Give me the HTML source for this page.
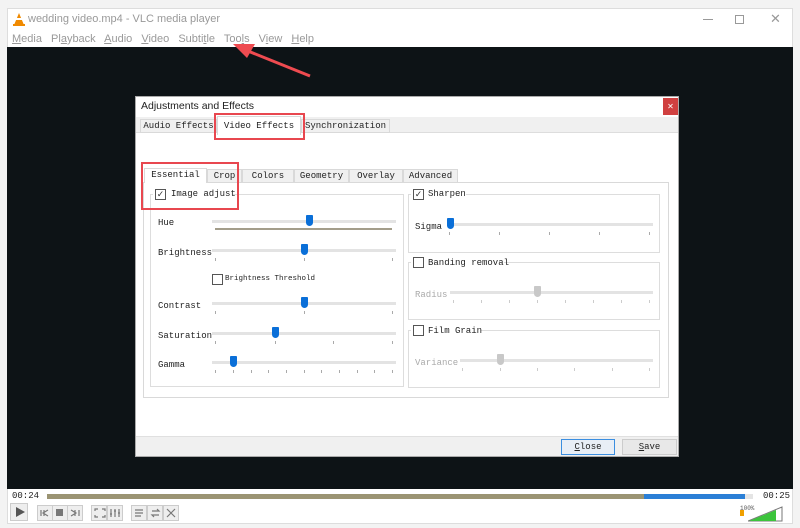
<!DOCTYPE html>
<html><head><meta charset="utf-8"><style>
*{margin:0;padding:0;box-sizing:border-box}
body{width:800px;height:528px;background:#f3f3f3;position:relative;overflow:hidden;font-family:"Liberation Sans",sans-serif}
.a{position:absolute}
.m{font-family:"Liberation Mono",monospace;color:#222;white-space:nowrap}
.trk{position:absolute;height:3px;background:#e3e3e3}
.h{position:absolute;width:7px;height:11px;background:#0a6fd8;border-radius:1px 1px 4px 4px}
.hg{background:#c8c8c8}
.tk{position:absolute;width:1px;height:3px;background:#aaa}
.cb{position:absolute;width:11px;height:11px;border:1px solid #555;background:#fff;font-size:9px;line-height:9px;text-align:center;color:#333}
.grp{position:absolute;border:1px solid #ddd}
.tab{position:absolute;background:#f0f0f0;border:1px solid #d9d9d9;font-family:"Liberation Mono",monospace;font-size:9px;line-height:13px;text-align:center;color:#222;white-space:nowrap}
.red{position:absolute;border:2px solid #e8474f}
.btn{position:absolute;width:16px;height:16px;border:1px solid #ccc;background:#eee}
</style></head><body>
<div class="a" style="left:7px;top:8px;width:786px;height:516px;background:#fff;border:1px solid #ddd"></div>
<svg class="a" style="left:12px;top:12px" width="14" height="14"><polygon points="7,1 12,13 2,13" fill="#f08a00"/><rect x="1" y="12" width="12" height="2" fill="#f08a00"/><rect x="4" y="6" width="6" height="2" fill="#fff"/></svg>
<div class="a" style="left:28px;top:13px;font-size:11px;color:#999">wedding video.mp4 - VLC media player</div>
<div class="a" style="left:703px;top:19px;width:10px;height:1px;background:#999"></div>
<div class="a" style="left:735px;top:15px;width:9px;height:9px;border:1px solid #999"></div>
<div class="a" style="left:770px;top:11px;font-size:13px;color:#999">✕</div>
<div class="a" style="left:12px;top:33px;font-size:11px;color:#999;word-spacing:6px;white-space:nowrap"><u>M</u>edia Pl<u>a</u>yback <u>A</u>udio <u>V</u>ideo Subti<u>t</u>le Too<u>l</u>s V<u>i</u>ew <u>H</u>elp</div>
<div class="a" style="left:7px;top:47px;width:786px;height:442px;background:#0d1316"></div>
<svg class="a" style="left:225px;top:40px" width="90" height="40"><line x1="85" y1="36" x2="18" y2="9" stroke="#ee4b50" stroke-width="3"/><polygon points="8,4 30,4 22,18" fill="#ee4b50"/></svg>
<div class="a" style="left:135px;top:96px;width:544px;height:361px;background:#fff;border:1px solid #aaa"></div>
<div class="a" style="left:141px;top:100px;font-size:10.5px;color:#222">Adjustments and Effects</div>
<div class="a" style="left:663px;top:98px;width:15px;height:17px;background:#d04040;color:#fff;font-size:8px;text-align:center;line-height:17px">✕</div>
<div class="a" style="left:136px;top:117px;width:542px;height:16px;background:#f0f0f0;border-bottom:1px solid #ddd"></div>
<div class="tab" style="left:140px;top:119px;width:77px;height:14px">Audio Effects</div>
<div class="tab" style="left:217px;top:116px;width:84px;height:19px;background:#fff;border-bottom:none;line-height:18px">Video Effects</div>
<div class="tab" style="left:301px;top:119px;width:89px;height:14px">Synchronization</div>
<div class="red" style="left:214px;top:113px;width:91px;height:27px"></div>
<div class="a" style="left:143px;top:182px;width:526px;height:216px;border:1px solid #d9d9d9"></div>
<div class="tab" style="left:144px;top:168px;width:63px;height:15px;background:#fff;border-bottom:none">Essential</div>
<div class="tab" style="left:207px;top:169px;width:35px;height:14px">Crop</div>
<div class="tab" style="left:242px;top:169px;width:52px;height:14px">Colors</div>
<div class="tab" style="left:294px;top:169px;width:55px;height:14px">Geometry</div>
<div class="tab" style="left:349px;top:169px;width:54px;height:14px">Overlay</div>
<div class="tab" style="left:403px;top:169px;width:55px;height:14px">Advanced</div>
<div class="grp" style="left:150px;top:194px;width:254px;height:193px"></div>
<div class="a" style="left:153px;top:189px;width:80px;height:12px;background:#fff"></div>
<div class="cb" style="left:155px;top:189px">✓</div>
<div class="a m" style="left:171px;top:189px;font-size:9px">Image adjust</div>
<div class="red" style="left:141px;top:162px;width:98px;height:48px"></div>
<div class="a m" style="left:158px;top:218px;font-size:9px">Hue</div>
<div class="trk" style="left:212px;top:220px;width:184px"></div>
<div class="a" style="left:215px;top:228px;width:177px;height:2px;background:#a39d8a"></div>
<div class="h" style="left:306px;top:215px"></div>
<div class="a m" style="left:158px;top:248px;font-size:9px">Brightness</div>
<div class="trk" style="left:212px;top:249px;width:184px"></div>
<div class="h" style="left:301px;top:244px"></div>
<div class="cb" style="left:212px;top:274px"></div>
<div class="a m" style="left:225px;top:275px;font-size:7.5px">Brightness Threshold</div>
<div class="a m" style="left:158px;top:301px;font-size:9px">Contrast</div>
<div class="trk" style="left:212px;top:302px;width:184px"></div>
<div class="h" style="left:301px;top:297px"></div>
<div class="a m" style="left:158px;top:331px;font-size:9px">Saturation</div>
<div class="trk" style="left:212px;top:332px;width:184px"></div>
<div class="h" style="left:272px;top:327px"></div>
<div class="a m" style="left:158px;top:360px;font-size:9px">Gamma</div>
<div class="trk" style="left:212px;top:361px;width:184px"></div>
<div class="h" style="left:230px;top:356px"></div>
<div class="tk" style="left:215px;top:258px"></div><div class="tk" style="left:304px;top:258px"></div><div class="tk" style="left:392px;top:258px"></div>
<div class="tk" style="left:215px;top:311px"></div><div class="tk" style="left:304px;top:311px"></div><div class="tk" style="left:392px;top:311px"></div>
<div class="tk" style="left:215px;top:341px"></div><div class="tk" style="left:275px;top:341px"></div><div class="tk" style="left:333px;top:341px"></div><div class="tk" style="left:392px;top:341px"></div>
<div class="tk" style="left:215px;top:370px"></div><div class="tk" style="left:233px;top:370px"></div><div class="tk" style="left:251px;top:370px"></div><div class="tk" style="left:268px;top:370px"></div><div class="tk" style="left:286px;top:370px"></div><div class="tk" style="left:304px;top:370px"></div><div class="tk" style="left:321px;top:370px"></div><div class="tk" style="left:339px;top:370px"></div><div class="tk" style="left:357px;top:370px"></div><div class="tk" style="left:374px;top:370px"></div><div class="tk" style="left:392px;top:370px"></div>
<div class="grp" style="left:408px;top:194px;width:252px;height:59px"></div>
<div class="a" style="left:411px;top:189px;width:55px;height:12px;background:#fff"></div>
<div class="cb" style="left:413px;top:189px">✓</div>
<div class="a m" style="left:428px;top:189px;font-size:9px">Sharpen</div>
<div class="a m" style="left:415px;top:222px;font-size:9px">Sigma</div>
<div class="trk" style="left:450px;top:223px;width:203px"></div>
<div class="h" style="left:447px;top:218px"></div>
<div class="tk" style="left:449px;top:232px"></div><div class="tk" style="left:499px;top:232px"></div><div class="tk" style="left:549px;top:232px"></div><div class="tk" style="left:599px;top:232px"></div><div class="tk" style="left:649px;top:232px"></div>
<div class="grp" style="left:408px;top:262px;width:252px;height:58px"></div>
<div class="a" style="left:411px;top:257px;width:93px;height:12px;background:#fff"></div>
<div class="cb" style="left:413px;top:257px"></div>
<div class="a m" style="left:428px;top:258px;font-size:9px">Banding removal</div>
<div class="a m" style="left:415px;top:290px;font-size:9px;color:#aaa">Radius</div>
<div class="trk" style="left:450px;top:291px;width:203px"></div>
<div class="h hg" style="left:534px;top:286px"></div>
<div class="tk" style="left:453px;top:300px;background:#ccc"></div><div class="tk" style="left:481px;top:300px;background:#ccc"></div><div class="tk" style="left:509px;top:300px;background:#ccc"></div><div class="tk" style="left:537px;top:300px;background:#ccc"></div><div class="tk" style="left:565px;top:300px;background:#ccc"></div><div class="tk" style="left:593px;top:300px;background:#ccc"></div><div class="tk" style="left:621px;top:300px;background:#ccc"></div><div class="tk" style="left:649px;top:300px;background:#ccc"></div>
<div class="grp" style="left:408px;top:330px;width:252px;height:58px"></div>
<div class="a" style="left:411px;top:325px;width:70px;height:12px;background:#fff"></div>
<div class="cb" style="left:413px;top:325px"></div>
<div class="a m" style="left:428px;top:326px;font-size:9px">Film Grain</div>
<div class="a m" style="left:415px;top:358px;font-size:9px;color:#aaa">Variance</div>
<div class="trk" style="left:460px;top:359px;width:193px"></div>
<div class="h hg" style="left:497px;top:354px"></div>
<div class="tk" style="left:462px;top:368px;background:#ccc"></div><div class="tk" style="left:500px;top:368px;background:#ccc"></div><div class="tk" style="left:537px;top:368px;background:#ccc"></div><div class="tk" style="left:574px;top:368px;background:#ccc"></div><div class="tk" style="left:612px;top:368px;background:#ccc"></div><div class="tk" style="left:649px;top:368px;background:#ccc"></div>
<div class="a" style="left:136px;top:436px;width:542px;height:20px;background:#f0f0f0;border-top:1px solid #e0e0e0"></div>
<div class="a m" style="left:561px;top:439px;width:54px;height:16px;border:1px solid #3b8ee0;background:#e8eef6;font-size:9px;text-align:center;line-height:14px"><u>C</u>lose</div>
<div class="a m" style="left:622px;top:439px;width:55px;height:16px;border:1px solid #ccc;background:#e8e8e8;font-size:9px;text-align:center;line-height:14px"><u>S</u>ave</div>
<div class="a m" style="left:12px;top:491px;font-size:9px">00:24</div>
<div class="a m" style="left:763px;top:491px;font-size:9px">00:25</div>
<div class="a" style="left:47px;top:494px;width:706px;height:5px;background:#e4e4e4"></div>
<div class="a" style="left:47px;top:494px;width:597px;height:5px;background:#9b9473"></div>
<div class="a" style="left:644px;top:494px;width:101px;height:5px;background:#2b7fd6"></div>
<div class="btn" style="left:10px;top:503px;width:18px;height:18px"></div>
<svg class="a" style="left:14px;top:506px" width="12" height="12"><polygon points="2,1 11,6 2,11" fill="#555"/></svg>
<div class="btn" style="left:37px;top:505px"></div><div class="btn" style="left:52px;top:505px"></div><div class="btn" style="left:67px;top:505px"></div>
<div class="btn" style="left:91px;top:505px"></div><div class="btn" style="left:107px;top:505px"></div>
<div class="btn" style="left:131px;top:505px"></div><div class="btn" style="left:147px;top:505px"></div><div class="btn" style="left:163px;top:505px"></div>
<svg class="a" style="left:0;top:0" width="200" height="528" fill="none" stroke="#777" stroke-width="1.2">
<path d="M41 510v6M48 510l-5 3 5 3M44 510v6" /><rect x="56" y="509" width="7" height="7" fill="#777" stroke="none"/>
<path d="M71 510l5 3-5 3M75 510l0 6M79 510v6"/>
<path d="M95 511v-2h3M102 509h3v2M105 515v2h-3M98 517h-3v-2"/>
<path d="M111 509v8M115 509v8M119 509v8M110 514h2M114 511h2M118 513h2"/>
<path d="M135 510h8M135 513h8M135 516h6"/>
<path d="M152 511h7l-2-2M159 515h-7l2 2"/>
<path d="M167 509l8 8M175 509l-8 8"/>
</svg>
<div class="a" style="left:740px;top:510px;width:4px;height:6px;background:#f0a000"></div>
<div class="a m" style="left:740px;top:505px;font-size:6px;color:#555">100%</div>
<svg class="a" style="left:748px;top:506px" width="36" height="16"><polygon points="0,15 34,1 34,15" fill="#fff" stroke="#777"/><polygon points="1,15 28,4 28,15" fill="#3cc43c"/></svg>
</body></html>
